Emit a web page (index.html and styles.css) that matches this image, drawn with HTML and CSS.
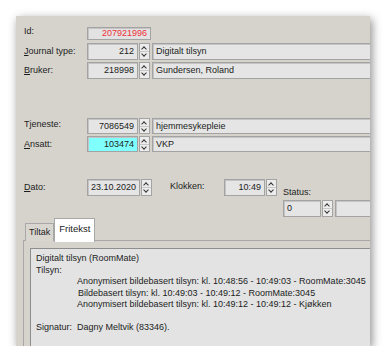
FILE: index.html
```html
<!DOCTYPE html>
<html lang="no">
<head>
    <meta charset="UTF-8">
    <title>Journal</title>
    <link rel="stylesheet" href="styles.css">
</head>
<body>
    <div class="window">
        <div class="row row-id">
            <div class="label label-high">Id:</div>
            <div class="field field-id">207921996</div>
        </div>

        <div class="row row-journal">
            <div class="label"><u>J</u>ournal type:</div>
            <div class="field field-num">212</div>
            <div class="spin"><span class="up"></span><span class="down"></span></div>
            <div class="field field-text">Digitalt tilsyn</div>
        </div>

        <div class="row row-bruker">
            <div class="label"><u>B</u>ruker:</div>
            <div class="field field-num">218998</div>
            <div class="spin"><span class="up"></span><span class="down"></span></div>
            <div class="field field-text">Gundersen, Roland</div>
        </div>

        <div class="row row-tjeneste">
            <div class="label label-high">Tjeneste:</div>
            <div class="field field-num">7086549</div>
            <div class="spin"><span class="up"></span><span class="down"></span></div>
            <div class="field field-text">hjemmesykepleie</div>
        </div>

        <div class="row row-ansatt">
            <div class="label"><u>A</u>nsatt:</div>
            <div class="field field-num field-cyan">103474</div>
            <div class="spin"><span class="up"></span><span class="down"></span></div>
            <div class="field field-text">VKP</div>
        </div>

        <div class="row row-dato">
            <div class="label label-dato"><u>D</u>ato:</div>
            <div class="field field-date">23.10.2020</div>
            <div class="spin"><span class="up"></span><span class="down"></span></div>
            <div class="label label-klokken">Klokken:</div>
            <div class="field field-time">10:49</div>
            <div class="spin"><span class="up"></span><span class="down"></span></div>
            <div class="status">
                <div class="status-label">Status:</div>
                <div class="status-row">
                    <div class="field field-status">0</div>
                    <div class="spin"><span class="up"></span><span class="down"></span></div>
                    <div class="field field-text"></div>
                </div>
            </div>
        </div>

        <div class="tabs">
            <div class="tab">Tiltak</div>
            <div class="tab tab-active">Fritekst</div>
        </div>
        <div class="tab-frame">
            <div class="note">
                <div>Digitalt tilsyn (RoomMate)</div>
                <div>Tilsyn:</div>
                <div class="indent">Anonymisert bildebasert tilsyn: kl. 10:48:56 - 10:49:03 - RoomMate:3045</div>
                <div class="indent indent-2">Bildebasert tilsyn: kl. 10:49:03 - 10:49:12 - RoomMate:3045</div>
                <div class="indent">Anonymisert bildebasert tilsyn: kl. 10:49:12 - 10:49:12 - Kjøkken</div>
                <div>&nbsp;</div>
                <div>Signatur:&nbsp; Dagny Meltvik (83346).</div>
            </div>
        </div>
    </div>
</body>
</html>
```

FILE: styles.css
```css
body {
    margin: 0;
    background-color: white;
    font-family: 'Liberation Sans', Arial, sans-serif;
    font-size: 9px;
    color: #1c1c1c;
}
.window {
    margin: 16px 0 0 16px;
    width: 354px;
    height: 330px;
    padding-left: 8px;
    box-sizing: border-box;
    background-color: #d6d3cc;
    box-shadow: 2px 3px 9px rgba(0,0,0,0.45);
    overflow: hidden;
}
.row {
    display: flex;
    align-items: center;
    height: 17px;
    margin-right: -20px;
}
.row-id {
    margin-top: 11px;
    height: 13px;
    align-items: flex-start;
}
.row-journal {
    margin-top: 3px;
}
.row-bruker {
    margin-top: 2px;
}
.row-tjeneste {
    margin-top: 39px;
    height: 16px;
}
.row-ansatt {
    margin-top: 2px;
    height: 16px;
}
.row-dato {
    margin-top: 27px;
    align-items: flex-start;
    height: 38px;
}
.label {
    width: 63px;
    flex-shrink: 0;
    line-height: 11px;
}
.label-high {
    align-self: flex-start;
    margin-top: -1px;
}
.row-tjeneste .label-high {
    margin-top: 1px;
}
.label-dato {
    margin-top: 3px;
}
.label-klokken {
    width: 54px;
    margin-left: 18px;
    margin-top: 2px;
}
.field {
    height: 100%;
    box-sizing: border-box;
    border: 1px solid #a3a3a3;
    box-shadow: inset 1px 1px 0 #c4c4c4;
    background-color: #e5e5e5;
    line-height: 15px;
    padding: 0 3px;
    white-space: nowrap;
    overflow: hidden;
}
.field-id {
    width: 64px;
    text-align: right;
    color: #f0303a;
    line-height: 11px;
    background-color: #e2e2e2;
}
.field-num {
    width: 51px;
    text-align: right;
}
.field-cyan {
    background-color: #80ffff;
}
.field-date {
    width: 53px;
    height: 17px;
    text-align: right;
}
.field-time {
    width: 41px;
    height: 17px;
    text-align: right;
}
.field-status {
    width: 38px;
    height: 17px;
}
.field-text {
    flex: 1;
    margin-left: 2px;
}
.row-dato .spin {
    height: 17px;
}
.spin {
    width: 11px;
    height: 100%;
    margin-left: 1px;
    box-sizing: border-box;
    border: 1px solid #a3a3a3;
    background-color: #ececec;
    display: flex;
    flex-direction: column;
    flex-shrink: 0;
}
.spin span {
    flex: 1;
    position: relative;
}
.spin span::before {
    content: '';
    position: absolute;
    left: 2px;
    width: 3px;
    height: 3px;
    border-left: 1px solid #333;
    border-top: 1px solid #333;
}
.spin .up::before {
    top: 3px;
    transform: rotate(45deg);
}
.spin .down {
    border-top: 1px solid #c8c8c8;
}
.spin .down::before {
    top: 0px;
    transform: rotate(225deg);
}
.status {
    margin-left: 6px;
    margin-top: 8px;
    flex: 1;
}
.status-label {
    line-height: 11px;
}
.status-row {
    display: flex;
    margin-top: 2px;
    height: 17px;
}
.tabs {
    display: flex;
    align-items: flex-end;
    margin-left: 1px;
    margin-top: 1px;
    height: 23px;
    position: relative;
    z-index: 1;
}
.tab {
    height: 18px;
    line-height: 17px;
    padding: 0 3px;
    box-sizing: border-box;
    border: 1px solid #a8a8a8;
    border-bottom: none;
    background-color: #d9d6d0;
}
.tab-active {
    height: 24px;
    line-height: 20px;
    padding: 0 4px;
    background-color: white;
    font-size: 9.5px;
    margin-bottom: -1px;
}
.tab-frame {
    margin-left: -1px;
    margin-top: -1px;
    margin-right: -20px;
    height: 120px;
    border-left: 1px solid #a8a8a8;
    border-top: 1px solid #a8a8a8;
    padding: 7px 0 0 6px;
}
.note {
    height: 100%;
    border: 1px solid #8e8e8e;
    border-right: none;
    background-color: #e3e3e3;
    padding: 4px 0 0 5px;
    line-height: 11.5px;
    white-space: nowrap;
}
.indent {
    padding-left: 41px;
}
.indent-2 {
    padding-left: 42px;
}
```
